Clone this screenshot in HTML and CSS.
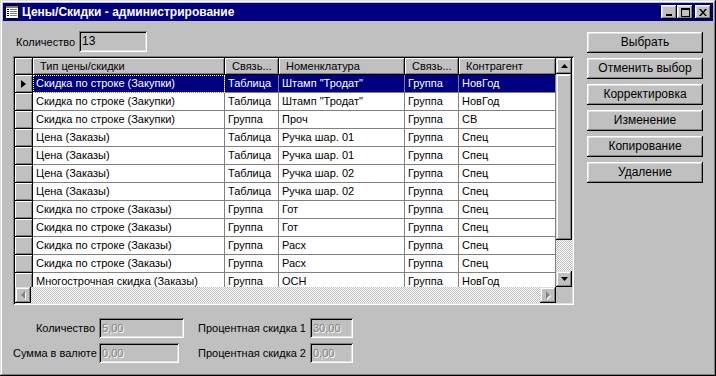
FILE: index.html
```html
<!DOCTYPE html>
<html lang="ru">
<head>
  <meta charset="UTF-8" />
  <title>Цены/Скидки - администрирование</title>
  <link rel="stylesheet" href="styles.css">
</head>
<body>
  <div class="window">
    <div class="titlebar">
      <svg class="app-icon" width="16" height="16" viewBox="0 0 16 16">
        <rect x="1.5" y="1.5" width="13" height="13" fill="#fff" stroke="#000"/>
        <rect x="2" y="2" width="12" height="2" fill="#808080"/>
        <rect x="3" y="5" width="2" height="1" fill="#000"/>
        <rect x="3" y="7" width="2" height="1" fill="#000"/>
        <rect x="3" y="9" width="2" height="1" fill="#000"/>
        <rect x="3" y="11" width="2" height="1" fill="#000"/>
        <rect x="6" y="5" width="7" height="1" fill="#808080"/>
        <rect x="6" y="7" width="7" height="1" fill="#808080"/>
        <rect x="6" y="9" width="7" height="1" fill="#808080"/>
        <rect x="6" y="11" width="7" height="1" fill="#808080"/>
      </svg>
      <span class="title">Цены/Скидки - администрирование</span>
      <div class="caption-buttons">
        <div class="cap">
          <svg width="8" height="7" viewBox="0 0 8 7"><rect x="1" y="5" width="6" height="2" fill="#000"/></svg>
        </div>
        <div class="cap">
          <svg width="9" height="9" viewBox="0 0 9 9"><path d="M0 0h9v9H0z M1 2v6h7V2z" fill="#000" fill-rule="evenodd"/></svg>
        </div>
        <div class="cap close">
          <svg width="8" height="7" viewBox="0 0 8 7"><path d="M0 0h2l2 2.5L6 0h2L5 3.5 8 7H6L4 4.5 2 7H0l3-3.5z" fill="#000"/></svg>
        </div>
      </div>
    </div>

    <div class="client">
      <div class="main">
        <div class="count-row">
          <span class="count-label">Количество</span>
          <div class="edit count-edit">13</div>
        </div>

        <div class="grid">
          <div class="grid-top">
            <div class="table">
              <div class="row head">
                <div class="ind"></div>
                <div class="hc">Тип цены/скидки</div>
                <div class="hc">Связь...</div>
                <div class="hc">Номенклатура</div>
                <div class="hc">Связь...</div>
                <div class="hc">Контрагент</div>
              </div>
              <div class="viewport">
                <div class="row selected">
                  <div class="ind"><span class="marker"></span></div>
                  <div class="c focus">Скидка по строке (Закупки)</div>
                  <div class="c">Таблица</div>
                  <div class="c">Штамп "Тродат"</div>
                  <div class="c">Группа</div>
                  <div class="c">НовГод</div>
                </div>
                <div class="row">
                  <div class="ind"></div>
                  <div class="c">Скидка по строке (Закупки)</div>
                  <div class="c">Таблица</div>
                  <div class="c">Штамп "Тродат"</div>
                  <div class="c">Группа</div>
                  <div class="c">НовГод</div>
                </div>
                <div class="row">
                  <div class="ind"></div>
                  <div class="c">Скидка по строке (Закупки)</div>
                  <div class="c">Группа</div>
                  <div class="c">Проч</div>
                  <div class="c">Группа</div>
                  <div class="c">СВ</div>
                </div>
                <div class="row">
                  <div class="ind"></div>
                  <div class="c">Цена (Заказы)</div>
                  <div class="c">Таблица</div>
                  <div class="c">Ручка шар. 01</div>
                  <div class="c">Группа</div>
                  <div class="c">Спец</div>
                </div>
                <div class="row">
                  <div class="ind"></div>
                  <div class="c">Цена (Заказы)</div>
                  <div class="c">Таблица</div>
                  <div class="c">Ручка шар. 01</div>
                  <div class="c">Группа</div>
                  <div class="c">Спец</div>
                </div>
                <div class="row">
                  <div class="ind"></div>
                  <div class="c">Цена (Заказы)</div>
                  <div class="c">Таблица</div>
                  <div class="c">Ручка шар. 02</div>
                  <div class="c">Группа</div>
                  <div class="c">Спец</div>
                </div>
                <div class="row">
                  <div class="ind"></div>
                  <div class="c">Цена (Заказы)</div>
                  <div class="c">Таблица</div>
                  <div class="c">Ручка шар. 02</div>
                  <div class="c">Группа</div>
                  <div class="c">Спец</div>
                </div>
                <div class="row">
                  <div class="ind"></div>
                  <div class="c">Скидка по строке (Заказы)</div>
                  <div class="c">Группа</div>
                  <div class="c">Гот</div>
                  <div class="c">Группа</div>
                  <div class="c">Спец</div>
                </div>
                <div class="row">
                  <div class="ind"></div>
                  <div class="c">Скидка по строке (Заказы)</div>
                  <div class="c">Группа</div>
                  <div class="c">Гот</div>
                  <div class="c">Группа</div>
                  <div class="c">Спец</div>
                </div>
                <div class="row">
                  <div class="ind"></div>
                  <div class="c">Скидка по строке (Заказы)</div>
                  <div class="c">Группа</div>
                  <div class="c">Расх</div>
                  <div class="c">Группа</div>
                  <div class="c">Спец</div>
                </div>
                <div class="row">
                  <div class="ind"></div>
                  <div class="c">Скидка по строке (Заказы)</div>
                  <div class="c">Группа</div>
                  <div class="c">Расх</div>
                  <div class="c">Группа</div>
                  <div class="c">Спец</div>
                </div>
                <div class="row">
                  <div class="ind"></div>
                  <div class="c">Многострочная скидка (Заказы)</div>
                  <div class="c">Группа</div>
                  <div class="c">ОСН</div>
                  <div class="c">Группа</div>
                  <div class="c">НовГод</div>
                </div>
              </div>
            </div>

            <div class="vscroll">
              <div class="sb-btn">
                <svg width="7" height="4" viewBox="0 0 7 4"><path d="M3.5 0L7 4H0z" fill="#000"/></svg>
              </div>
              <div class="thumb"></div>
              <div class="track"></div>
              <div class="sb-btn">
                <svg width="7" height="4" viewBox="0 0 7 4"><path d="M0 0h7L3.5 4z" fill="#000"/></svg>
              </div>
            </div>
          </div>

          <div class="grid-bottom">
            <div class="hscroll">
              <div class="sb-btn">
                <svg width="5" height="9" viewBox="0 0 5 9"><path d="M5 1v8L1 5z" fill="#fff"/><path d="M4 0v8L0 4z" fill="#808080"/></svg>
              </div>
              <div class="track"></div>
              <div class="sb-btn">
                <svg width="5" height="9" viewBox="0 0 5 9"><path d="M1 1v8l4-4z" fill="#fff"/><path d="M0 0v8l4-4z" fill="#808080"/></svg>
              </div>
            </div>
            <div class="corner"></div>
          </div>
        </div>

        <div class="fields">
          <span class="f-label">Количество</span>
          <div class="edit disabled w85">5,00</div>
          <span class="f-label">Процентная скидка 1</span>
          <div class="edit disabled">30,00</div>

          <span class="f-label">Сумма в валюте</span>
          <div class="edit disabled w80">0,00</div>
          <span class="f-label">Процентная скидка 2</span>
          <div class="edit disabled">0,00</div>
        </div>
      </div>

      <div class="actions">
        <div class="btn">Выбрать</div>
        <div class="btn">Отменить выбор</div>
        <div class="btn">Корректировка</div>
        <div class="btn">Изменение</div>
        <div class="btn">Копирование</div>
        <div class="btn">Удаление</div>
      </div>
    </div>
  </div>
</body>
</html>
```

FILE: styles.css
```css
body {
  margin: 0;
  font-family: "Liberation Sans", Arial, sans-serif;
  font-size: 11px;
  color: #000;
  background: #c0c0c0;
}

.window {
  width: 716px;
  height: 376px;
  box-sizing: border-box;
  padding: 3px;
  background: #c0c0c0;
  box-shadow: inset -1px -1px #000, inset 1px 1px #dfdfdf,
              inset -2px -2px #808080, inset 2px 2px #fff;
}

/* title bar */
.titlebar {
  height: 18px;
  background: #000080;
  display: flex;
  align-items: center;
  padding: 0 2px 0 1px;
}

.app-icon {
  flex: none;
}

.title {
  margin-left: 2px;
  color: #fff;
  font-weight: bold;
  font-size: 12px;
  white-space: nowrap;
}

.caption-buttons {
  margin-left: auto;
  display: flex;
}

.cap {
  width: 16px;
  height: 14px;
  box-sizing: border-box;
  background: #c0c0c0;
  display: flex;
  align-items: center;
  justify-content: center;
  box-shadow: inset -1px -1px #000, inset 1px 1px #fff,
              inset -2px -2px #808080, inset 2px 2px #dfdfdf;
}

.cap.close {
  margin-left: 2px;
}

/* client area */
.client {
  display: flex;
  padding: 10px 0 0 10px;
}

.main {
  width: 561px;
}

.count-row {
  display: flex;
  align-items: center;
  height: 21px;
  padding-left: 3px;
}

.count-label {
  width: 63px;
}

.edit {
  height: 20px;
  box-sizing: border-box;
  padding: 0 3px;
  line-height: 20px;
  background: #c0c0c0;
  white-space: nowrap;
  box-shadow: inset 1px 1px #808080, inset -1px -1px #fff,
              inset 2px 2px #000, inset -2px -2px #dfdfdf;
}

.count-edit {
  width: 68px;
  height: 21px;
  line-height: 21px;
  font-size: 12px;
}

/* grid */
.grid {
  margin-top: 4px;
  padding: 2px;
  box-shadow: inset 1px 1px #808080, inset -1px -1px #fff,
              inset 2px 2px #000, inset -2px -2px #dfdfdf;
}

.grid-top,
.grid-bottom {
  display: flex;
}

.table {
  width: 541px;
}

.row {
  display: grid;
  grid-template-columns: 18px 192px 54px 126px 54px 97px;
  height: 18px;
}

.row.head {
  height: 17px;
}

.viewport {
  height: 212px;
  overflow: hidden;
  background: #c0c0c0;
}

.ind {
  background: #c0c0c0;
  box-sizing: border-box;
  border-right: 1px solid #000;
  border-bottom: 1px solid #000;
  box-shadow: inset 1px 1px #fff, inset -1px -1px #808080;
  display: flex;
  align-items: center;
}

.marker {
  margin-left: 6px;
  width: 0;
  height: 0;
  border-left: 5px solid #000;
  border-top: 4px solid transparent;
  border-bottom: 4px solid transparent;
}

.hc {
  background: #c0c0c0;
  box-sizing: border-box;
  border-right: 1px solid #000;
  border-bottom: 1px solid #000;
  box-shadow: inset 1px 1px #fff, inset -1px -1px #808080;
  padding-left: 7px;
  line-height: 16px;
  white-space: nowrap;
  overflow: hidden;
}

.c {
  background: #fff;
  box-sizing: border-box;
  border-right: 1px solid #808080;
  border-bottom: 1px solid #808080;
  padding-left: 3px;
  line-height: 17px;
  white-space: nowrap;
  overflow: hidden;
}

.selected .c {
  background: #000080;
  color: #fff;
}

.selected .c.focus {
  outline: 1px dotted #ffff80;
  outline-offset: -1px;
}

/* scrollbars */
.vscroll {
  width: 16px;
  display: flex;
  flex-direction: column;
}

.sb-btn {
  width: 16px;
  height: 16px;
  flex: none;
  box-sizing: border-box;
  background: #c0c0c0;
  display: flex;
  align-items: center;
  justify-content: center;
  box-shadow: inset -1px -1px #000, inset 1px 1px #dfdfdf,
              inset -2px -2px #808080, inset 2px 2px #fff;
}

.thumb {
  height: 166px;
  background: #c0c0c0;
  box-shadow: inset -1px -1px #000, inset 1px 1px #dfdfdf,
              inset -2px -2px #808080, inset 2px 2px #fff;
}

.track {
  flex: 1;
  background-color: #c0c0c0;
  background-image: conic-gradient(#fff 25%, #c0c0c0 0 50%, #fff 0 75%, #c0c0c0 0);
  background-size: 2px 2px;
}

.hscroll {
  width: 541px;
  height: 16px;
  display: flex;
}

.corner {
  width: 16px;
  height: 16px;
  background: #c0c0c0;
}

/* bottom fields */
.fields {
  margin-top: 13px;
  display: grid;
  grid-template-columns: 86px 85px 126px 43px;
  grid-auto-rows: 20px;
  row-gap: 5px;
  align-items: center;
}

.f-label {
  text-align: right;
  padding-right: 4px;
  white-space: nowrap;
}

.edit.disabled {
  color: #808080;
  text-shadow: 1px 1px #fff;
}

.w85 {
  width: 85px;
}

.w80 {
  width: 80px;
}

/* action buttons */
.actions {
  margin-left: 13px;
  margin-top: 1px;
  display: flex;
  flex-direction: column;
  gap: 5px;
}

.btn {
  width: 116px;
  height: 21px;
  box-sizing: border-box;
  background: #c0c0c0;
  text-align: center;
  line-height: 21px;
  font-size: 12px;
  box-shadow: inset -1px -1px #000, inset 1px 1px #fff,
              inset -2px -2px #808080, inset 2px 2px #dfdfdf;
}
```
